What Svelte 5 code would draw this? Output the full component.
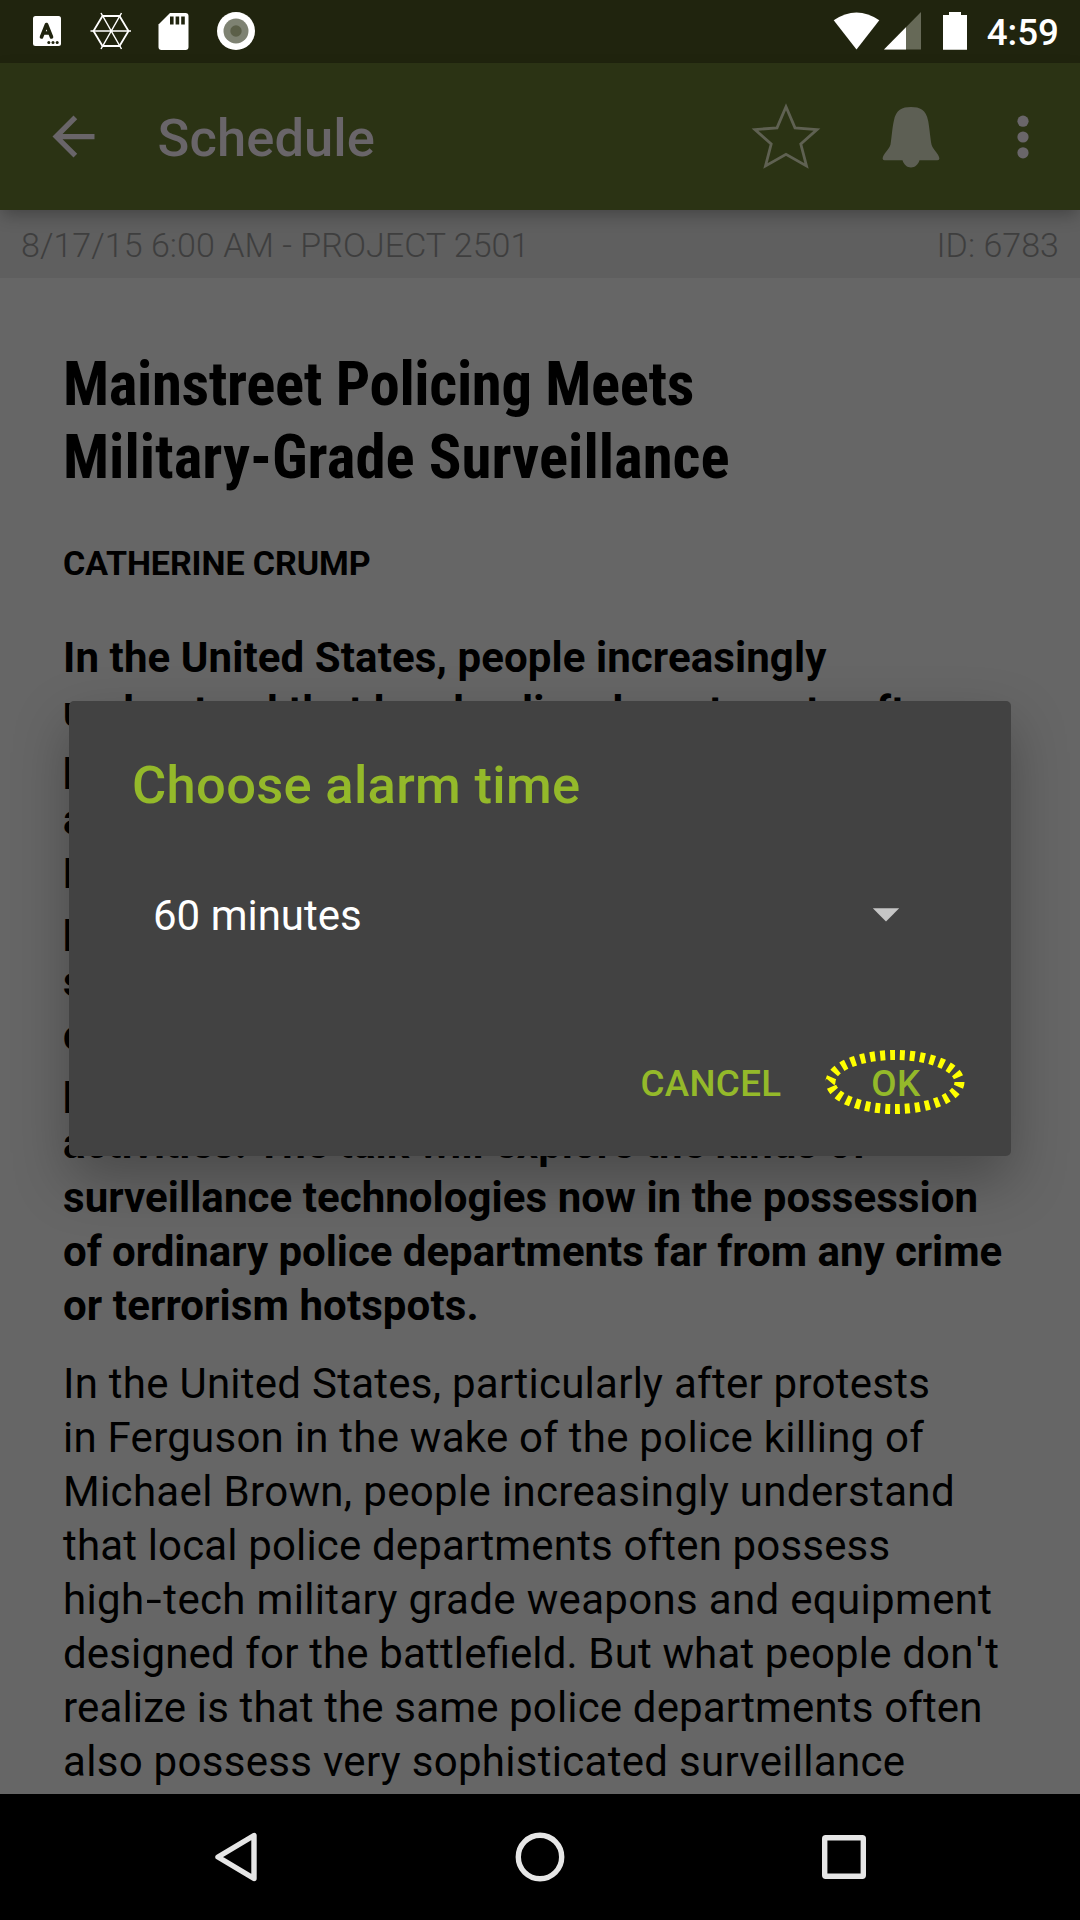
<script>
  const title = [
    { text: 'Mainstreet Policing Meets', track: -0.36 },
    { text: 'Military-Grade Surveillance', track: 0 }
  ];

  const lede = [
    { text: 'In the United States, people increasingly', track: 0.1 },
    { text: 'understand that local police departments often', track: 0.06 },
    { text: 'possess advanced military grade weapons', track: 0 },
    { text: 'and equipment designed for battlefields.', track: 0 },
    { text: 'But what people do not realize is that', track: 0 },
    { text: 'police departments also have access to', track: 0 },
    { text: 'sophisticated surveillance equipment', track: 0 },
    { text: 'capable of monitoring large numbers of', track: 0 },
    { text: 'people who are going about everyday', track: 0 },
    { text: 'activities. The talk will explore the kinds of', track: 0 },
    { text: 'surveillance technologies now in the possession', track: 0.06 },
    { text: 'of ordinary police departments far from any crime', track: -0.04 },
    { text: 'or terrorism hotspots.', track: 0.1 }
  ];
  const body = [
    { text: 'In the United States, particularly after protests', track: 0.26 },
    { text: 'in Ferguson in the wake of the police killing of', track: 0.25 },
    { text: 'Michael Brown, people increasingly understand', track: 0.34 },
    { text: 'that local police departments often possess', track: 0.16 },
    { text: 'high-tech military grade weapons and equipment', track: 0.33 },
    { text: "designed for the battlefield. But what people don't", track: 0.15 },
    { text: 'realize is that the same police departments often', track: 0.15 },
    { text: 'also possess very sophisticated surveillance', track: 0.3 }
  ];

  // Hyphens and apostrophes get extra side bearing in the body copy,
  // and "fi" stays untracked so that its ligature forms.
  const parts = (text) => text.split(/([-']|fi)/);
</script>

<div class="screen">
  <div class="status">
    <div class="notes">
      <svg class="n-a" width="30" height="32" viewBox="0 0 30 32">
        <rect x="1" y="1" width="28" height="30" rx="2.5" fill="#fff" />
        <path d="M9.5 22 L14.5 9.5 L19.5 22 M11.5 18 H17.5" fill="none" stroke="#20240e" stroke-width="3.6" stroke-linecap="round" stroke-linejoin="round" />
        <circle cx="16.8" cy="27.5" r="1.5" fill="#20240e" /><circle cx="21" cy="27.5" r="1.5" fill="#20240e" /><circle cx="25.2" cy="27.5" r="1.5" fill="#20240e" />
      </svg>
      <svg class="n-web" width="42" height="38" viewBox="0 0 42 38" fill="none" stroke="#fff">
        <path d="M12.5 4 H29.5 L38.5 19 L29.5 34 H12.5 L3.5 19 Z" stroke-width="1.8" />
        <path d="M0.5 19 H41 M11 1 L31.5 37 M31.5 1 L11 37" stroke-width="1.5" />
      </svg>
      <svg class="n-sd" width="31" height="39" viewBox="0 0 31 39">
        <path d="M12 1 H27.5 Q30.5 1 30.5 4 V35 Q30.5 38 27.5 38 H3.5 Q.5 38 .5 35 V12.5 Z" fill="#fff" />
        <path d="M12 4.5 h3.6 v8 H12z M17.6 4.5 h3.6 v8 h-3.6z M23.2 4.5 h3.6 v8 h-3.6z" fill="#20240e" />
      </svg>
      <svg width="38" height="38" viewBox="0 0 38 38">
        <circle cx="19" cy="19" r="19" fill="#fff" /><circle cx="19" cy="19" r="12.5" fill="#7e8272" /><circle cx="19" cy="19" r="5.7" fill="#5b5f48" />
      </svg>
    </div>
    <div class="system">
      <svg width="47" height="38" viewBox="0 0 47 38"><path d="M.7 8.3 Q23.5 -7.3 46.3 8.3 L23.5 37.5 Z" fill="#fff" /></svg>
      <svg class="s-cell" width="37" height="38" viewBox="0 0 37 38"><path d="M37 0 V37.5 H0 Z" fill="#666957" /><path d="M22 15.2 V37.5 H0 Z" fill="#fff" /></svg>
      <svg class="s-bat" width="24" height="38" viewBox="0 0 24 38"><path d="M6 0 H18 V3 H24 V37.7 H0 V3 H6 Z" fill="#fff" /></svg>
      <span class="clock">4:59</span>
    </div>
  </div>

  <header class="bar">
    <svg class="back" width="63" height="63" viewBox="0 0 24 24"><path d="M20 11H7.83l5.59-5.59L12 4l-8 8 8 8 1.41-1.41L7.83 13H20v-2z" fill="#696569" /></svg>
    <h1>Schedule</h1>
    <svg class="star" width="70" height="68" viewBox="0 0 70 68">
      <path d="M35 3.800 L44 24.800 L66 26.600 L49.800 41 L55.500 63 L35 51.400 L14.500 63 L20.200 41 L4 26.600 L26 24.800 Z" fill="none" stroke="#5f6152" stroke-width="2.800" stroke-miterlimit="10" />
    </svg>
    <svg class="bell" width="58" height="62" viewBox="0 0 58 62">
      <path d="M29 1 C38 1 44 3.500 46.200 15 C47.500 22 48.300 32 49.500 38.500 C50.500 43 57 48 57.400 52.500 Q57.400 54.300 55.500 54.300 H37.500 C36 59 33 61.500 29 61.500 C25 61.500 22 59 20.500 54.300 H2.500 Q.6 54.300 .6 52.500 C1 48 7.500 43 8.500 38.500 C9.700 32 10.200 22 11.800 15 C14 3.500 20 1 29 1 Z" fill="#5d5f54" />
    </svg>
    <svg class="more" width="12" height="44" viewBox="0 0 12 44" fill="#6a666a"><circle cx="6" cy="6.200" r="5.600" /><circle cx="6" cy="22" r="5.600" /><circle cx="6" cy="37.800" r="5.600" /></svg>
  </header>

  <div class="meta"><span>8/17/15 6:00 AM - PROJECT 2501</span><span>ID: 6783</span></div>

  <article>
    <h2>{#each title as l}<span class="row" style:letter-spacing="{l.track}px">{l.text}</span>{/each}</h2>
    <p class="author">CATHERINE CRUMP</p>
    <p class="lede">{#each lede as l}<span class="row" style:letter-spacing="{l.track}px">{l.text}</span>{/each}</p>
    <p class="body">{#each body as l}<span class="row" style:letter-spacing="{l.track}px">{#each parts(l.text) as part}<span class:hyphen={part === '-'} class:apos={part === "'"} class:lig={part === 'fi'}>{part}</span>{/each}</span>{/each}</p>
  </article>

  <nav>
    <svg width="44" height="52" viewBox="0 0 44 52"><path d="M40 4.500 V47.500 L4 26 Z" /></svg>
    <svg width="50" height="50" viewBox="0 0 50 50"><circle cx="25" cy="25" r="21.700" /></svg>
    <svg width="44" height="44" viewBox="0 0 44 44"><rect x="2.700" y="2.700" width="38.600" height="38.600" rx="1" /></svg>
  </nav>

  <section class="dialog">
    <h3>Choose alarm time</h3>
    <div class="spinner"><span>60 minutes</span><svg width="28" height="14" viewBox="0 0 28 14"><path d="M.8 .2 H27.200 L14 13.500 Z" fill="#c6c6c6" /></svg></div>
    <div class="actions">
      <span class="btn">CANCEL</span>
      <span class="btn">OK<svg class="ring" width="140" height="66" viewBox="0 0 140 66"><ellipse cx="70" cy="33" rx="64.500" ry="27" pathLength="300" fill="none" stroke="#ff0" stroke-width="10" stroke-dasharray="5 5" /></svg></span>
    </div>
  </section>
</div>

<style>
  :global(body) { margin: 0; }
  .screen { position: relative; width: 1080px; height: 1920px; overflow: hidden; display: flex; flex-direction: column; background: #666; color: #000; font-family: Roboto, sans-serif; white-space: nowrap; }
  h1, h2, h3, p { margin: 0; }
  svg { display: block; flex: none; }

  .status { height: 63px; flex: none; box-sizing: border-box; display: flex; justify-content: space-between; background: #20240e; padding: 12px 21px 0 32px; }
  .notes, .system { display: flex; align-items: flex-start; }
  .n-a { margin-top: 3px; }
  .n-web { margin-left: 28px; }
  .n-sd { margin-left: 26px; margin-right: 28px; }
  .s-cell { margin-left: 4px; }
  .s-bat { margin-left: 22px; }
  .clock { margin-left: 19.500px; line-height: 41px; font-size: 36.750px; font-weight: 500; color: #fff; }

  .bar { position: relative; height: 147px; flex: none; display: flex; align-items: center; background: #2b3314; box-shadow: 0 7px 16px -2px rgba(0, 0, 0, .28); padding-left: 42px; }
  .bar h1 { width: 593.500px; margin-left: 52.500px; padding-top: 3px; font-size: 52.500px; font-weight: 500; line-height: 62px; letter-spacing: .1px; color: #696569; }
  .bell { margin-left: 61px; }
  .more { margin-left: 76.500px; }

  .meta { height: 68px; flex: none; box-sizing: border-box; display: flex; justify-content: space-between; padding: 3px 21px 0; background: #5f5f5f; color: #3e3e3e; font-size: 34px; font-weight: 300; line-height: 65px; letter-spacing: .04px; }

  article { height: 1516px; flex: none; box-sizing: border-box; overflow: hidden; padding: 70px 0 0 63px; }
  .row { display: block; }
  h2 { font-size: 60.800px; font-weight: 700; font-stretch: 75%; line-height: 73px; }
  .author { margin-top: 49px; font-size: 34px; font-weight: 700; line-height: 40px; letter-spacing: -.07px; }
  .lede { margin-top: 48px; font-size: 42px; font-weight: 700; line-height: 54px; }
  .body { margin-top: 24px; font-size: 42px; line-height: 54px; }
  .hyphen { display: inline-block; margin: 0 3.500px; transform: scaleX(1.35); }
  .apos { margin: 0 2.200px; }
  .lig { letter-spacing: 0; }

  nav { height: 126px; flex: none; box-sizing: border-box; display: flex; align-items: center; justify-content: space-between; padding: 0 214px; background: #000; }
  nav svg { fill: none; stroke: #e6e6e6; stroke-width: 5.400px; stroke-linejoin: round; }

  .dialog { position: absolute; left: 69px; top: 701px; width: 942px; height: 455px; box-sizing: border-box; padding-top: 53px; border-radius: 5px; background: #424242; box-shadow: 0 24px 56px rgba(0, 0, 0, .28); }
  h3 { padding-left: 63px; font-size: 52.500px; font-weight: 500; line-height: 62px; letter-spacing: .3px; color: #94b92a; }
  .spinner { display: flex; align-items: center; justify-content: space-between; height: 127px; margin-top: 36px; padding: 0 111.500px 0 84px; font-size: 42px; color: #fff; }
  .spinner svg { margin-bottom: 2px; }
  .actions { display: flex; justify-content: flex-end; align-items: center; gap: 90px; height: 107px; margin-top: 51px; padding-right: 90.500px; }
  .btn { position: relative; font-size: 36.750px; font-weight: 500; letter-spacing: .3px; color: #94b92a; }
  .ring { position: absolute; left: -46px; top: -13px; }
</style>
